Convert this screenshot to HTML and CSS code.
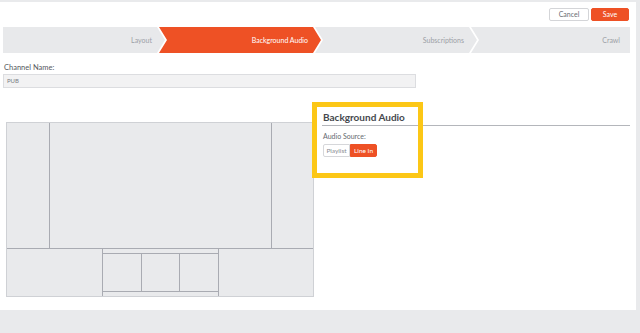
FILE: index.html
```html
<!DOCTYPE html>
<html lang="en">
<head>
    <meta charset="UTF-8">
    <meta name="viewport" content="width=device-width, initial-scale=1.0">
    <title>Channel - Background Audio</title>
    <link rel="stylesheet" href="styles.css">
</head>
<body>
    <div class="panel">
        <div class="toolbar">
            <button class="btn btn-cancel">Cancel</button>
            <button class="btn btn-save">Save</button>
        </div>

        <div class="wizard">
            <div class="step step-first">Layout</div>
            <div class="step active">Background Audio</div>
            <div class="step">Subscriptions</div>
            <div class="step step-last">Crawl</div>
        </div>

        <div class="field">
            <label class="field-label">Channel Name:</label>
            <div class="field-input">PUB</div>
        </div>

        <div class="content">
            <div class="preview">
                <div class="zone-top">
                    <div class="zone side"></div>
                    <div class="zone main"></div>
                    <div class="zone side last"></div>
                </div>
                <div class="zone-bottom">
                    <div class="zone foot"></div>
                    <div class="ticker">
                        <div class="strip"></div>
                        <div class="cells">
                            <div class="cell"></div>
                            <div class="cell"></div>
                            <div class="cell last"></div>
                        </div>
                        <div class="strip strip-bottom"></div>
                    </div>
                    <div class="zone foot-right"></div>
                </div>
            </div>

            <div class="settings">
                <h2 class="settings-title">Background Audio</h2>
                <div class="settings-label">Audio Source:</div>
                <div class="toggle">
                    <button class="toggle-btn">Playlist</button>
                    <button class="toggle-btn selected">Line In</button>
                </div>
                <!-- highlight box drawn over the audio settings -->
                <div class="highlight"></div>
            </div>
        </div>
    </div>
</body>
</html>
```

FILE: styles.css
```css
* {
    box-sizing: border-box;
}

body {
    font-family: Lato, 'Open Sans', sans-serif;
    margin: 0;
    padding: 0;
    width: 640px;
    height: 333px;
    overflow: hidden;
    background: #e9eaec;
}

.panel {
    margin-top: 2px;
    width: 636px;
    height: 308px;
    background: #ffffff;
    padding: 0 6px 0 3px;
}

/* Top buttons */
.toolbar {
    display: flex;
    justify-content: flex-end;
    gap: 2px;
    padding-top: 6px;
    padding-right: 1px;
}

.btn {
    height: 13px;
    padding: 0;
    border-radius: 2px;
    font-family: inherit;
    font-size: 7px;
    line-height: 11px;
    cursor: pointer;
}

.btn-cancel {
    width: 40px;
    background: #ffffff;
    border: 1px solid #d4d5d8;
    color: #6b6e74;
}

.btn-save {
    width: 38px;
    background: #ee5125;
    border: 1px solid #ee5125;
    color: #ffffff;
}

/* Wizard steps */
.wizard {
    display: flex;
    height: 26px;
    margin-top: 6px;
}

.step {
    flex: 1;
    margin-right: -6px;
    background: #e8e9eb;
    color: #9c9fa6;
    font-size: 7px;
    line-height: 26px;
    text-align: right;
    padding-right: 13px;
    clip-path: polygon(0 0, calc(100% - 8px) 0, 100% 50%, calc(100% - 8px) 100%, 0 100%, 8px 50%);
}

.step-first {
    clip-path: polygon(0 0, calc(100% - 8px) 0, 100% 50%, calc(100% - 8px) 100%, 0 100%);
}

.step-last {
    margin-right: 0;
    padding-right: 10px;
    clip-path: polygon(0 0, 100% 0, 100% 100%, 0 100%, 8px 50%);
}

.step.active {
    background: #ee5125;
    color: #ffffff;
}

/* Channel name */
.field {
    margin-top: 10px;
}

.field-label {
    display: block;
    font-size: 7.5px;
    line-height: 10px;
    color: #55585e;
    padding-left: 1px;
}

.field-input {
    width: 413px;
    height: 14px;
    margin-top: 1px;
    background: #f2f2f3;
    border: 1px solid #dcdde0;
    font-size: 6px;
    line-height: 12px;
    color: #7a7d83;
    padding-left: 3px;
}

/* Preview and settings */
.content {
    display: flex;
    margin-top: 14px;
}

.preview {
    width: 308px;
    height: 175px;
    margin-top: 20px;
    margin-left: 3px;
    background: #e9eaec;
    border: 1px solid #cfd1d5;
    display: flex;
    flex-direction: column;
}

.zone-top {
    display: flex;
    height: 126px;
    border-bottom: 1px solid #a9abb2;
}

.zone {
    border-right: 1px solid #a9abb2;
}

.zone.side {
    width: 43px;
}

.zone.main {
    flex: 1;
}

.zone.side.last {
    width: 41px;
    border-right: none;
}

.zone-bottom {
    flex: 1;
    display: flex;
}

.zone.foot {
    width: 96px;
}

.zone.foot-right {
    flex: 1;
    border-right: none;
}

.ticker {
    width: 116px;
    display: flex;
    flex-direction: column;
    border-right: 1px solid #a9abb2;
}

.strip {
    height: 5px;
    border-bottom: 1px solid #a9abb2;
}

.strip-bottom {
    border-bottom: none;
    border-top: 1px solid #a9abb2;
}

.cells {
    flex: 1;
    display: flex;
}

.cell {
    flex: 1;
    border-right: 1px solid #a9abb2;
}

.cell.last {
    border-right: none;
}

.settings {
    position: relative;
    width: 308px;
    margin-left: 8px;
}

.settings-title {
    margin: 0;
    padding: 9px 0 2px 1px;
    font-size: 10px;
    line-height: 12px;
    font-weight: 700;
    color: #45484e;
    border-bottom: 1px solid #b4b6bb;
}

.settings-label {
    margin-top: 6px;
    padding-left: 1px;
    font-size: 7px;
    line-height: 9px;
    color: #66696f;
}

.toggle {
    display: flex;
    margin-top: 3px;
    padding-left: 1px;
}

.toggle-btn {
    width: 27px;
    height: 13px;
    padding: 0;
    font-family: inherit;
    font-size: 6.5px;
    line-height: 11px;
    background: #ffffff;
    color: #8a8d93;
    border: 1px solid #d6d7da;
    border-radius: 2px 0 0 2px;
}

.toggle-btn.selected {
    background: #ee5125;
    border-color: #ee5125;
    color: #ffffff;
    border-radius: 0 2px 2px 0;
}

.highlight {
    position: absolute;
    left: -10px;
    top: 0;
    width: 111px;
    height: 76px;
    border: 5px solid #fcc716;
    pointer-events: none;
}
```
